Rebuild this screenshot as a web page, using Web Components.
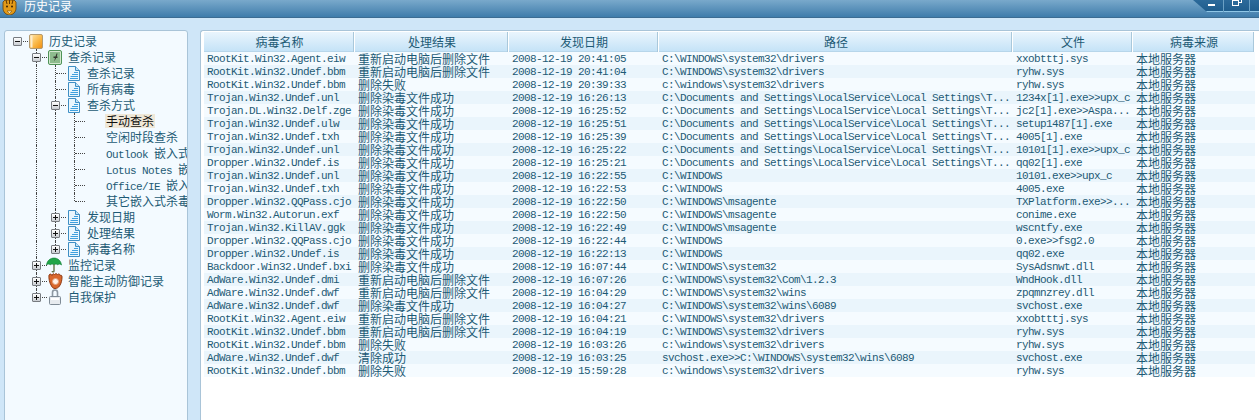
<!DOCTYPE html>
<html><head><meta charset="utf-8"><title>历史记录</title>
<style>
html,body{margin:0;padding:0;width:1259px;height:420px;overflow:hidden;background:#cfe6f8;}
body{font-family:"Liberation Mono","Noto Sans CJK SC",monospace;color:#1d5a75;}
</style></head><body>
<history-app></history-app>
<script>
const esc=s=>s.replace(/&/g,'&amp;').replace(/</g,'&lt;').replace(/>/g,'&gt;');
const rich=s=>esc(s).replace(/([\u3000-\u9fff]+)/g,'<span class="c">$1</span>');
const FONT_CSS=`.t{font:11px/13px "Liberation Mono","Noto Sans CJK SC",monospace;letter-spacing:-.6px;white-space:pre}
.c{font:12px/13px "Noto Sans CJK SC",sans-serif;letter-spacing:0;position:relative;top:-1px}`;
const ICONS={
 book:`<svg width="16" height="16" viewBox="0 0 16 16"><defs><linearGradient id="o" x1="0" y1="0" x2="1" y2="1"><stop offset="0" stop-color="#ffe9b0"/><stop offset=".6" stop-color="#f9b440"/><stop offset="1" stop-color="#ee8a10"/></linearGradient></defs><rect x=".5" y="1.500" width="13" height="14" rx="1.500" fill="url(#o)" stroke="#b39a70"/><rect x="1.500" y="2.500" width="2" height="12" fill="#fdeccb"/></svg>`,
 scan:`<svg width="16" height="16" viewBox="0 0 16 16"><rect x=".5" y="1.500" width="13" height="14" rx="1.500" fill="#d3e8cf" stroke="#4f9358"/><rect x="2" y="3" width="10" height="11" fill="#8dbb8d"/><path d="M8.500 4.500 7.500 7.500H5.500V9H7l-.8 3.500 2-3.500h1.300V7.500H8.800L9.500 4.500z" fill="#33382f"/></svg>`,
 doc:`<svg width="16" height="16" viewBox="0 0 16 16"><path d="M1.500 1.500h7l4 4v10h-11z" fill="#e9f6fd" stroke="#3f8fc4"/><path d="M8.500 1.500v4h4" fill="#bfe3f7" stroke="#3f8fc4"/><path d="M7 7.500h4M5 9.500h6M3.500 11.500h7.500M3 13.500h8" stroke="#3ea0de" stroke-width="1.200"/></svg>`,
 umbrella:`<svg width="16" height="16" viewBox="0 0 16 16" style="overflow:visible;margin-left:-2px"><path d="M.5 8C1 3.500 4.500 1 8 1s7 2.500 7.500 7c-1.500-1.200-3-1.200-3.700 0-1-1.200-2.600-1.200-3.800 0-1.200-1.200-2.800-1.200-3.800 0C3.500 6.800 2 6.800.5 8z" fill="#20a548" stroke="#0f7a34" stroke-width=".6"/><path d="M8 7.500V14c0 1.200-1.800 1.200-1.800 0" fill="none" stroke="#5b6a3a" stroke-width="1.300"/></svg>`,
 glove:`<svg width="16" height="16" viewBox="0 0 16 16"><path d="M1 2c1-1.500 2.500-1 3 .5C4.500.500 6 .500 6.500 1.500 7 .5 9 .5 9.500 1.500c1-1 2.500-.5 2.700 1 1-.8 1.800 0 1.800 1.500 0 3-.7 6.500-2.500 9-1 1.500-2.500 2.500-4.500 2.500S4.500 14.500 3.500 13C1.500 10 .5 5 1 2z" fill="#d9682c" stroke="#8f3a14"/><circle cx="7.500" cy="8.500" r="3" fill="#fff3ea" stroke="#e4a27c"/></svg>`,
 lock:`<svg width="16" height="16" viewBox="0 0 16 16"><path d="M4.500 7V3.500a2.500 2.500 0 0 1 5 0V7" fill="none" stroke="#8e98a2" stroke-width="1.600"/><rect x="1.500" y="7.500" width="11" height="8" rx="1" fill="#e7ebef" stroke="#7f8b96"/><rect x="3" y="9" width="8" height="2" fill="#fff"/></svg>`,
 tiger:`<svg width="15" height="15" viewBox="0 0 15 15"><path d="M1 2 3 0h9l2 2v6c0 4-3 7-6.500 7S1 12 1 8z" fill="#e39a18" stroke="#6a4208" stroke-width=".8"/><path d="M4 0 5 4M7.500 0v4M11 0l-1 4" stroke="#5a3506"/><circle cx="5" cy="6.500" r="1" fill="#3a2204"/><circle cx="10" cy="6.500" r="1" fill="#3a2204"/><path d="M5 11h5l-2.500 2.500z" fill="#fbe9b8" stroke="#6a4208" stroke-width=".5"/></svg>`
};
class TitleBar extends HTMLElement{
 connectedCallback(){const r=this.attachShadow({mode:'open'});r.innerHTML=`<style>
 :host{display:flex;height:17px;align-items:flex-start;background:linear-gradient(#79a9cb,#3f7cab);border-bottom:1px solid #3c6c92;overflow:hidden}
 .logo{margin:0 0 0 2px;height:15px}
 .n{margin-left:7px;font:12px/11px "Noto Sans CJK SC",sans-serif;color:#fff;flex:1}
 .ctl{width:66px;height:12px;background:linear-gradient(#2c6a9a,#1e5c8c);box-shadow:inset 0 -1px 0 #8fc6e6;display:flex;clip-path:polygon(0 0,100% 0,100% 100%,14px 100%)}
 .b{height:12px;position:relative;box-sizing:border-box;flex:none}
 .min{width:30px}.res{width:27px;border-left:1px solid #6ba0c4;border-right:1px solid #6ba0c4}.end{width:9px}
 .min:before{content:"";position:absolute;left:15px;top:4px;width:7px;height:2px;background:#fff}
 .res:before{content:"";position:absolute;left:11px;top:-3px;width:7px;height:6px;border:1px solid #fff;box-sizing:border-box}
 .res:after{content:"";position:absolute;left:8px;top:0;width:7px;height:6px;border:1px solid #fff;box-sizing:border-box;background:#2c6a9a}
 </style><div class="logo">${ICONS.tiger}</div><div class="n"><slot></slot></div><div class="ctl"><span class="b min"></span><span class="b res"></span><span class="b end"></span></div>`;}
}
customElements.define('title-bar',TitleBar);
class TreeRow extends HTMLElement{
 connectedCallback(){
  const lv=this.getAttribute('guides')||'';const st=this.getAttribute('state')||'';const ic=this.getAttribute('icon');
  const sel=this.hasAttribute('selected');const last=this.hasAttribute('last');
  const guides=[...lv].map(g=>`<i class="g ${g=='1'?'v':''}"></i>`).join('');
  const box=st?`<b class="box">${st=='-'?'<u class="h"></u>':'<u class="h"></u><u class="w"></u>'}</b>`:'';
  const r=this.attachShadow({mode:'open'});
  r.innerHTML=`<style>${FONT_CSS}
  :host{display:flex;height:16px;color:#1d5a75;white-space:nowrap}
  .g{display:block;width:19px;flex:none;position:relative}
  .v:before,.con:before{content:"";position:absolute;left:4px;top:0;bottom:0;border-left:1px dotted #444}
  .con{display:block;width:16px;flex:none;position:relative}
  .con.l:before{bottom:8px}
  .con.root:before{display:none}
  .con:after{content:"";position:absolute;left:5px;width:10px;top:8px;border-top:1px dotted #444}
  .box{position:absolute;left:0;top:4px;width:9px;height:9px;box-sizing:border-box;border:1px solid #777b80;background:linear-gradient(#fff,#c9cdd2);z-index:1;border-radius:1px}
  u{position:absolute;background:#111}
  .h{left:1px;top:3px;width:5px;height:1px}.w{left:3px;top:1px;width:1px;height:5px}
  .ic{width:16px;height:16px;flex:none;margin-right:4px}
  .ic svg{display:block}
  .lab{height:14px;margin-top:1px}
  .sel{background:#efe8d8;color:#111;padding:0 1px;margin-left:-1px}
  .t{line-height:14px;display:block}.c{line-height:14px;top:0}
  </style>${guides}<span class="con ${last?'l':''} ${this.hasAttribute('root')?'root':''}">${box}</span><span class="ic">${ICONS[ic]||''}</span><span class="lab ${sel?'sel':''}"><span class="t">${rich(this.getAttribute('label'))}</span></span>`;
 }
}
customElements.define('tree-row',TreeRow);
class TreePanel extends HTMLElement{
 connectedCallback(){const r=this.attachShadow({mode:'open'});r.innerHTML=`<style>
 :host{display:block;box-sizing:border-box;width:184px;height:calc(100% + 4px);margin-left:4px;border:1px solid #a9c4d8;border-radius:3px;background:#f3faff;overflow:hidden;padding:2px 0 0 8px}
 </style><slot></slot>`;}
}
customElements.define('tree-panel',TreePanel);
const COLS='151px 154px 150px 354px 120px 122px';
class TableHeader extends HTMLElement{
 connectedCallback(){const r=this.attachShadow({mode:'open'});
  const h=this.getAttribute('cols').split('|');
  r.innerHTML=`<style>
  :host{display:grid;grid-template-columns:${COLS};height:20px;background:linear-gradient(#eaf5fd,#c5e3f7);border-bottom:1px solid #b7d6ea;box-sizing:border-box}
  div{font:12px/20px "Noto Sans CJK SC",sans-serif;color:#1d5a75;text-align:center;box-shadow:inset -1px 0 0 #fff,inset -2px 0 0 #a9c8db;}
  </style>${h.map(x=>`<div>${x}</div>`).join('')}`;}
}
customElements.define('table-header',TableHeader);
class TableRow extends HTMLElement{
 connectedCallback(){const r=this.attachShadow({mode:'open'});
  const c=this.getAttribute('cells').split('|');
  r.innerHTML=`<style>${FONT_CSS}
  :host{display:grid;grid-template-columns:${COLS};height:13px;color:#1d5a75;background:${this.hasAttribute('alt')?'#eaf5fc':'#f5fbff'}}
  .t{display:block;overflow:hidden;padding-left:3px;height:13px;position:relative;top:1px;margin-bottom:-1px}
  </style>${c.map(x=>`<span class="t">${rich(x)}</span>`).join('')}`;}
}
customElements.define('table-row',TableRow);
class DataTable extends HTMLElement{
 connectedCallback(){const r=this.attachShadow({mode:'open'});r.innerHTML=`<style>
 :host{display:block;box-sizing:border-box;flex:1;height:calc(100% + 4px);border:1px solid #a9c4d8;border-right:0;border-radius:3px 0 0 0;background:#fff;padding:1px 4px 0 3px;overflow:hidden}
 </style><slot></slot>`;}
}
customElements.define('data-table',DataTable);
class HistoryApp extends HTMLElement{
 connectedCallback(){
  const R1='重新启动电脑后删除文件',F='删除失败',S='删除染毒文件成功',D='2008-12-19 ',DR='C:\\WINDOWS\\system32\\drivers',dr='c:\\windows\\system32\\drivers',LS='C:\\Documents and Settings\\LocalService\\Local Settings\\T...',W='C:\\WINDOWS',MS='C:\\WINDOWS\\msagente';
  const rows=[
  ['RootKit.Win32.Agent.eiw',R1,'20:41:05',DR,'xxobtttj.sys'],['RootKit.Win32.Undef.bbm',R1,'20:41:04',DR,'ryhw.sys'],['RootKit.Win32.Undef.bbm',F,'20:39:33',dr,'ryhw.sys'],
  ['Trojan.Win32.Undef.unl',S,'16:26:13',LS,'1234x[1].exe>>upx_c'],['Trojan.DL.Win32.Delf.zge',S,'16:25:52',LS,'jc2[1].exe>>Aspa...'],['Trojan.Win32.Undef.ulw',S,'16:25:51',LS,'setup1487[1].exe'],
  ['Trojan.Win32.Undef.txh',S,'16:25:39',LS,'4005[1].exe'],['Trojan.Win32.Undef.unl',S,'16:25:22',LS,'10101[1].exe>>upx_c'],['Dropper.Win32.Undef.is',S,'16:25:21',LS,'qq02[1].exe'],
  ['Trojan.Win32.Undef.unl',S,'16:22:55',W,'10101.exe>>upx_c'],['Trojan.Win32.Undef.txh',S,'16:22:53',W,'4005.exe'],['Dropper.Win32.QQPass.cjo',S,'16:22:50',MS,'TXPlatform.exe>>...'],
  ['Worm.Win32.Autorun.exf',S,'16:22:50',MS,'conime.exe'],['Trojan.Win32.KillAV.ggk',S,'16:22:49',MS,'wscntfy.exe'],['Dropper.Win32.QQPass.cjo',S,'16:22:44',W,'0.exe>>fsg2.0'],
  ['Dropper.Win32.Undef.is',S,'16:22:13',W,'qq02.exe'],['Backdoor.Win32.Undef.bxi',S,'16:07:44','C:\\WINDOWS\\system32','SysAdsnwt.dll'],['AdWare.Win32.Undef.dmi',R1,'16:07:26','C:\\WINDOWS\\system32\\Com\\1.2.3','WndHook.dll'],
  ['AdWare.Win32.Undef.dwf',R1,'16:04:29','C:\\WINDOWS\\system32\\wins','zpqmnzrey.dll'],['AdWare.Win32.Undef.dwf',S,'16:04:27','C:\\WINDOWS\\system32\\wins\\6089','svchost.exe'],['RootKit.Win32.Agent.eiw',R1,'16:04:21',DR,'xxobtttj.sys'],
  ['RootKit.Win32.Undef.bbm',R1,'16:04:19',DR,'ryhw.sys'],['RootKit.Win32.Undef.bbm',F,'16:03:26',dr,'ryhw.sys'],['AdWare.Win32.Undef.dwf','清除成功','16:03:25','svchost.exe>>C:\\WINDOWS\\system32\\wins\\6089','svchost.exe'],['RootKit.Win32.Undef.bbm',F,'15:59:28',dr,'ryhw.sys']];
  const tree=[
  ['','-','book','历史记录','root'],['0','-','scan','查杀记录'],['01','','doc','查杀记录'],['01','','doc','所有病毒'],['01','-','doc','查杀方式'],
  ['011','','','手动查杀','selected'],['011','','','空闲时段查杀'],['011','','','Outlook 嵌入式查杀'],['011','','','Lotus Notes 嵌入式查杀'],['011','','','Office/IE 嵌入式查杀'],['011','','','其它嵌入式杀毒','last'],
  ['01','+','doc','发现日期'],['01','+','doc','处理结果'],['01','+','doc','病毒名称','last'],['0','+','umbrella','监控记录'],['0','+','glove','智能主动防御记录'],['0','+','lock','自我保护','last']];
  const a=s=>s.replace(/&/g,'&amp;').replace(/"/g,'&quot;').replace(/>/g,'&gt;');
  const r=this.attachShadow({mode:'open'});
  r.innerHTML=`<style>
  :host{display:flex;flex-direction:column;width:1259px;height:420px;overflow:hidden}
  .main{flex:1;display:flex;gap:12px;padding-top:12px;min-height:0}
  </style><title-bar>历史记录</title-bar><div class="main"><tree-panel>${tree.map(t=>`<tree-row guides="${t[0]}" state="${t[1]}" icon="${t[2]}" label="${t[3]}" ${t[4]||''}></tree-row>`).join('')}</tree-panel><data-table><table-header cols="病毒名称|处理结果|发现日期|路径|文件|病毒来源"></table-header>${rows.map((x,i)=>`<table-row ${i%2?'alt':''} cells="${a([x[0],x[1],D+x[2],x[3],x[4],'本地服务器'].join('|'))}"></table-row>`).join('')}</data-table></div>`;
 }
}
customElements.define('history-app',HistoryApp);
</script></body></html>
